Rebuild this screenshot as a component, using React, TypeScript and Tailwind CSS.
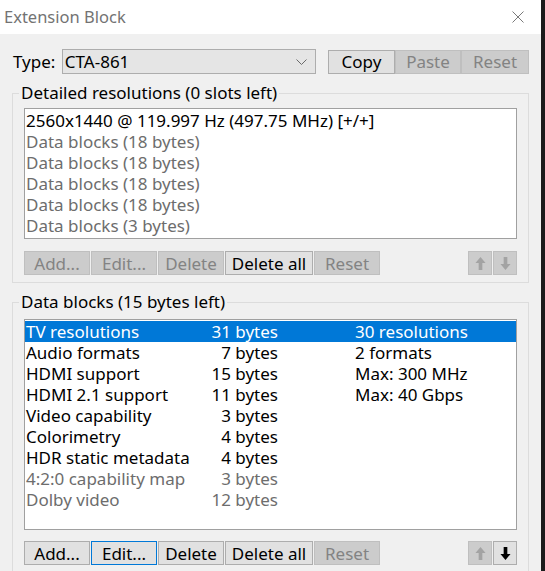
import React from 'react';

const font = { fontFamily: '"Noto Sans", "Open Sans", sans-serif' };

function Btn({ label, disabled, focused, w }: { label: string; disabled?: boolean; focused?: boolean; w: string }) {
  const base = 'flex h-[24px] items-center justify-center border text-[17px] leading-none';
  const cls = disabled
    ? 'border-[#bfbfbf] bg-[#cccccc] text-[#838383]'
    : focused
      ? 'border-[#0078d7] bg-[#e1e1e1] text-black'
      : 'border-[#adadad] bg-[#e1e1e1] text-black';
  return <div className={`${base} ${cls} ${w}`}>{label}</div>;
}

function Arrow({ up, disabled }: { up?: boolean; disabled?: boolean }) {
  const c = disabled ? '#a3a3a3' : '#000000';
  return (
    <div
      className={`flex h-[24px] w-[24px] items-center justify-center border ${
        disabled ? 'border-[#bfbfbf] bg-[#cccccc]' : 'border-[#adadad] bg-[#e1e1e1]'
      }`}
    >
      <svg width="11" height="15" viewBox="0 0 12 16" className={up ? '' : 'rotate-180'}>
        <path d="M6 1 L11.5 7.5 H8 V15 H4 V7.5 H0.5 Z" fill={c} />
      </svg>
    </div>
  );
}

function ButtonRow({ disabledSet, focused, upDisabled, downDisabled }: {
  disabledSet: string[];
  focused?: string;
  upDisabled: boolean;
  downDisabled: boolean;
}) {
  const btns: [string, string][] = [
    ['Add...', 'w-[66px]'],
    ['Edit...', 'w-[66px]'],
    ['Delete', 'w-[66px]'],
    ['Delete all', 'w-[88px]'],
    ['Reset', 'w-[66px]'],
  ];
  return (
    <div className="flex items-center">
      <div className="flex gap-[1px]">
        {btns.map(([l, w]) => (
          <Btn key={l} label={l} w={w} disabled={disabledSet.includes(l)} focused={focused === l} />
        ))}
      </div>
      <div className="ml-auto flex gap-[1px]">
        <Arrow up disabled={upDisabled} />
        <Arrow disabled={downDisabled} />
      </div>
    </div>
  );
}

const resolutions = [
  { t: '2560x1440 @ 119.997 Hz (497.75 MHz) [+/+]', dim: false },
  { t: 'Data blocks (18 bytes)', dim: true },
  { t: 'Data blocks (18 bytes)', dim: true },
  { t: 'Data blocks (18 bytes)', dim: true },
  { t: 'Data blocks (18 bytes)', dim: true },
  { t: 'Data blocks (3 bytes)', dim: true },
];

const blocks = [
  { n: 'TV resolutions', b: '31 bytes', i: '30 resolutions', sel: true },
  { n: 'Audio formats', b: '7 bytes', i: '2 formats' },
  { n: 'HDMI support', b: '15 bytes', i: 'Max: 300 MHz' },
  { n: 'HDMI 2.1 support', b: '11 bytes', i: 'Max: 40 Gbps' },
  { n: 'Video capability', b: '3 bytes', i: '' },
  { n: 'Colorimetry', b: '4 bytes', i: '' },
  { n: 'HDR static metadata', b: '4 bytes', i: '' },
  { n: '4:2:0 capability map', b: '3 bytes', i: '', dim: true },
  { n: 'Dolby video', b: '12 bytes', i: '', dim: true },
];

export default function App() {
  return (
    <div className="flex h-[571px] w-[545px] overflow-hidden border-r-4 border-[#1b1b1b] bg-[#f0f0f0]" style={font}>
      <div className="flex w-full flex-col">
        {/* title bar */}
        <div className="flex h-[34px] shrink-0 items-center bg-white pl-[4px] pr-[17px]">
          <span className="text-[16.5px] text-[#737373]">Extension Block</span>
          <svg className="ml-auto" width="12" height="12" viewBox="0 0 12 12">
            <path d="M0.5 0.5 L11.5 11.5 M11.5 0.5 L0.5 11.5" stroke="#7a7a7a" strokeWidth="1" />
          </svg>
        </div>

        <div className="flex flex-col px-[12px] pt-[15px]">
          {/* type row */}
          <div className="flex h-[25px] items-center">
            <span className="w-[50px] pl-[1px] text-[17px] text-black">Type:</span>
            <div className="flex h-[25px] w-[255px] items-center border border-[#adadad] bg-[#e5e5e5] pl-[2px] pr-[8px] text-[17px] text-black">
              CTA-861
              <svg className="ml-auto" width="11" height="6" viewBox="0 0 11 6">
                <path d="M0.5 0.5 L5.5 5.5 L10.5 0.5" stroke="#6a6a6a" fill="none" strokeWidth="1" />
              </svg>
            </div>
            <div className="ml-[12px] flex">
              <Btn label="Copy" w="w-[67px]" />
              <Btn label="Paste" w="w-[66px]" disabled />
              <Btn label="Reset" w="w-[68px]" disabled />
            </div>
          </div>

          {/* detailed resolutions */}
          <fieldset className="mt-[9px] h-[200px] border border-[#dcdcdc] px-[11px] pt-[5px]">
            <legend className="-ml-[5px] px-[2px] text-[17px] leading-[20px] text-black">
              Detailed resolutions (0 slots left)
            </legend>
            <div className="h-[131px] border border-[#a0a0a0] bg-white pt-[1px]">
              {resolutions.map((r, i) => (
                <div
                  key={i}
                  className={`h-[21px] pl-[1px] text-[17px] leading-[21px] ${r.dim ? 'text-[#6d6d6d]' : 'text-black'}`}
                >
                  {r.t}
                </div>
              ))}
            </div>
            <div className="mt-[12px]">
              <ButtonRow
                disabledSet={['Add...', 'Edit...', 'Delete', 'Reset']}
                upDisabled
                downDisabled
              />
            </div>
          </fieldset>

          {/* data blocks */}
          <fieldset className="mt-[9px] h-[290px] border border-[#dcdcdc] px-[11px] pt-[7px]">
            <legend className="-ml-[5px] px-[2px] text-[17px] leading-[20px] text-black">
              Data blocks (15 bytes left)
            </legend>
            <div className="h-[211px] border border-[#a0a0a0] bg-white pt-[1px]">
              {blocks.map((b, i) => (
                <div
                  key={i}
                  className={`flex h-[21px] items-center text-[17px] leading-[21px] ${
                    b.sel ? 'bg-[#0078d7] text-white' : b.dim ? 'text-[#6d6d6d]' : 'text-black'
                  }`}
                >
                  <span className="w-[185px] pl-[1px]">{b.n}</span>
                  <span className="w-[68px] text-right">{b.b}</span>
                  <span className="pl-[77px]">{b.i}</span>
                </div>
              ))}
            </div>
            <div className="mt-[11px]">
              <ButtonRow
                disabledSet={['Reset']}
                focused="Edit..."
                upDisabled
                downDisabled={false}
              />
            </div>
          </fieldset>
        </div>
      </div>
    </div>
  );
}
